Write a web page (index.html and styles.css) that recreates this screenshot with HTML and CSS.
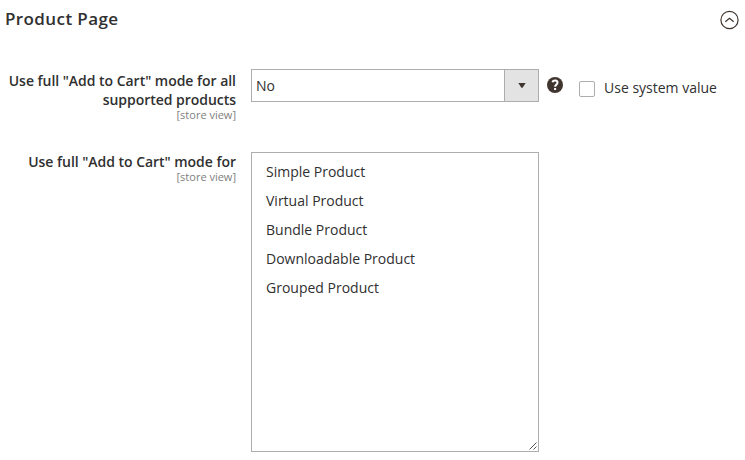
FILE: index.html
```html
<!DOCTYPE html>
<html lang="en">
<head>
<meta charset="utf-8">
<title>Product Page</title>
<link rel="stylesheet" href="styles.css">
</head>
<body>
<header class="section-head">
  <h1 class="title">Product Page</h1>
  <svg class="collapse" width="20" height="20" viewBox="0 0 20 20"><circle cx="10.5" cy="10" r="8.6"/><path d="M6.3 11.8 10.5 8.2l4.2 3.6"/></svg>
</header>
<main class="fields">
  <div class="field">
    <div class="label"><span class="label-text">Use full "Add to Cart" mode for all supported products</span><span class="scope">[store view]</span></div>
    <div class="select"><span class="value">No</span><span class="arrow"><svg width="8" height="5" viewBox="0 0 8 5"><path d="M0.3 0h7.4L4.6 4.7H3.4z"/></svg></span></div>
    <div class="help"><svg width="16" height="16" viewBox="0 0 16 16"><circle cx="8" cy="8" r="8"/><path d="M5.4 5.3C6.1 3 10.6 2.9 10.5 5.8c0 1.8-2.4 1.9-2.4 3.9M8.1 11v2"/></svg></div>
    <div class="system"><span class="box"></span><span>Use system value</span></div>
  </div>
  <div class="field">
    <div class="label label-single"><span class="label-text">Use full "Add to Cart" mode for</span><span class="scope">[store view]</span></div>
    <div class="list">
      <div class="option">Simple Product</div>
      <div class="option">Virtual Product</div>
      <div class="option">Bundle Product</div>
      <div class="option">Downloadable Product</div>
      <div class="option">Grouped Product</div>
      <svg class="grip" width="8" height="8" viewBox="0 0 8 8"><path d="M0.5 7.5l7-7M4.5 7.5l3-3"/></svg>
    </div>
  </div>
</main>
</body>
</html>
```

FILE: styles.css
```css
* { box-sizing: border-box; }
body {
  margin: 0;
  width: 745px;
  height: 460px;
  overflow: hidden;
  background: #fff;
  color: #303030;
  font: 14px/19px "Open Sans", sans-serif;
}
.section-head {
  display: flex;
  justify-content: space-between;
  height: 69px;
  padding: 9px 6px 0 5px;
}
.title { margin: 0; font-size: 17px; line-height: 20px; font-weight: 600; letter-spacing: 0.4px; }
.collapse { margin-top: 1px; fill: none; stroke: #41362f; stroke-width: 1.2; }
.fields { display: flex; flex-direction: column; gap: 30px; }
.field { display: flex; align-items: flex-start; }
.label {
  display: flex;
  flex-direction: column;
  width: 236px;
  height: 53px;
  margin-right: 15px;
  padding-top: 2px;
  text-align: right;
}
.label-single { padding-top: 0; }
.label-text { font-weight: 600; letter-spacing: -0.03px; }
.scope { font-size: 11px; line-height: 11px; color: #808080; }
.select {
  display: flex;
  width: 288px;
  height: 33px;
  border: 1px solid #adadad;
}
.value { flex: 1; padding: 6px 4px 0; }
.arrow {
  display: flex;
  align-items: center;
  justify-content: center;
  width: 34px;
  border-left: 1px solid #adadad;
  background: #e3e3e3;
}
.arrow svg { fill: #41362f; }
.help { width: 16px; height: 16px; margin: 8px 0 0 8px; }
.help svg { display: block; fill: #41362f; }
.help path { fill: none; stroke: #fff; stroke-width: 2; }
.system { display: flex; gap: 9px; margin: 9px 0 0 16px; }
.box { width: 16px; height: 16px; margin-top: 3px; border: 1px solid #adadad; border-radius: 2px; }
.list {
  position: relative;
  width: 288px;
  height: 300px;
  padding: 4px 14px;
  border: 1px solid #adadad;
}
.option { height: 29px; padding-top: 5px; }
.grip { position: absolute; right: 1px; bottom: 1px; fill: none; stroke: #555; stroke-width: 1; }
```
